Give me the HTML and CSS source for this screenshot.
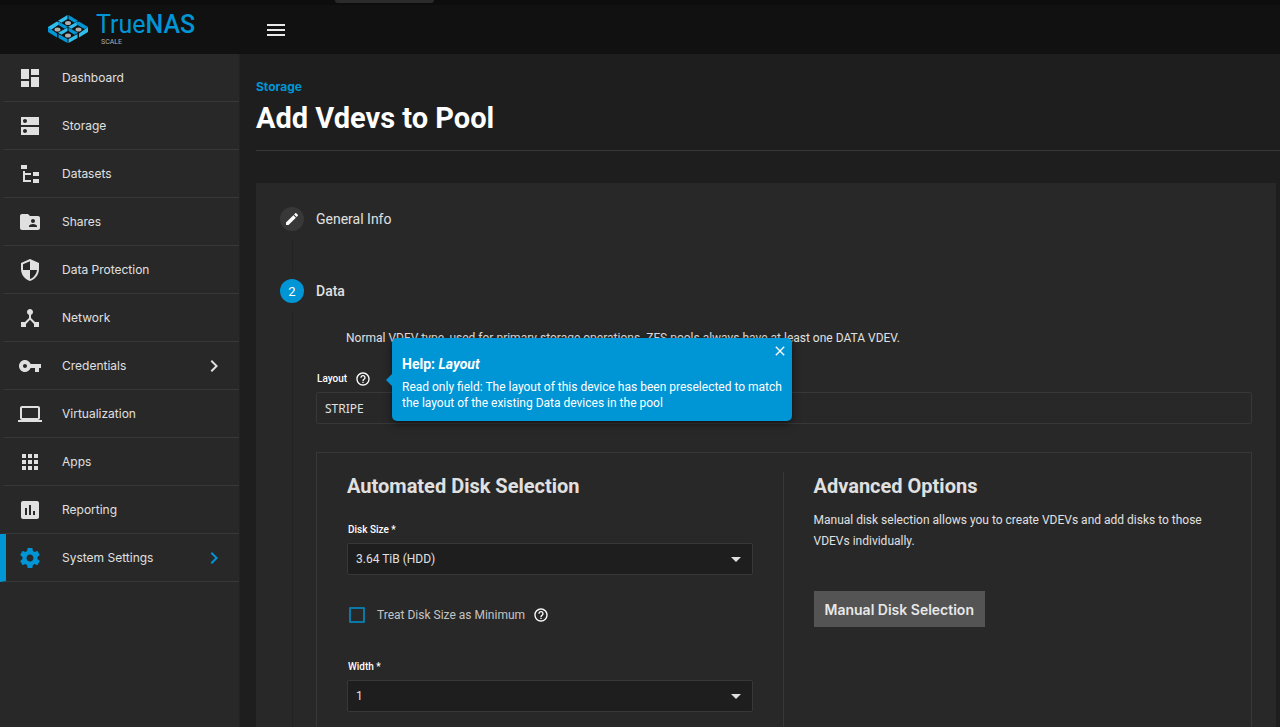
FILE: index.html
```
<!DOCTYPE html>
<html lang="en">
<head>
    <meta charset="UTF-8">
    <meta name="viewport" content="width=device-width, initial-scale=1.0">
    <title>TrueNAS - Add Vdevs to Pool</title>
    <link rel="stylesheet" href="styles.css">
</head>
<body>
    <header class="topbar">
        <div class="window-strip"><span class="window-tab"></span></div>
        <a href="#" class="logo">
            <!-- isometric lattice mark -->
            <svg class="logo-mark" viewBox="0 0 40 28" width="40" height="28">
                <g fill="#31beec">
                    <path d="M19.500 0v4l-6 3.800-3.500-2z"/>
                    <path d="M9 6.500l3.500 2L8 11.500 0 17v-5z"/>
                    <path d="M29.500 6.500v3.500l-6 3.800-3.500-2z"/>
                    <path d="M19.500 12.500v3.500l-6 3.800-3.500-2z"/>
                    <path d="M40 12v5l-9 5.500v-4z"/>
                    <path d="M29.500 19v4L20.500 28v-4z"/>
                </g>
                <g fill="#0095d5">
                    <path d="M20.500 0v4l6 3.800 3.500-2z"/>
                    <path d="M31 6.500l-3.500 2L32 11.500l4.500 2.500 3.500-2z"/>
                    <path d="M10.500 6.500v3.500l6 3.800 3.500-2z"/>
                    <path d="M20.500 12.500v3.500l6 3.800 3.500-2z"/>
                    <path d="M0 12v5l9 5.500v-4z"/>
                    <path d="M10.500 19v4l9 5v-4z"/>
                </g>
                <g fill="#aeaeae">
                    <ellipse cx="20" cy="8" rx="3" ry="2"/>
                    <ellipse cx="9.500" cy="14.500" rx="3" ry="2"/>
                    <ellipse cx="30.500" cy="14.500" rx="3" ry="2"/>
                    <ellipse cx="20" cy="20.500" rx="3" ry="2"/>
                </g>
            </svg>
            <span class="logo-text">
                <span class="logo-name">True<b>NAS</b></span>
                <span class="logo-edition">SCALE</span>
            </span>
        </a>
        <button class="menu-toggle" aria-label="Toggle menu">
            <svg viewBox="0 0 24 24" width="24" height="24"><path d="M3 18h18v-2H3v2zm0-5h18v-2H3v2zm0-7v2h18V6H3z"/></svg>
        </button>
    </header>

    <div class="layout">
        <nav class="sidebar">
            <a href="#" class="nav-item">
                <svg viewBox="0 0 24 24"><path d="M3 13h8V3H3v10zm0 8h8v-6H3v6zm10 0h8V11h-8v10zm0-18v6h8V3h-8z"/></svg>
                <span>Dashboard</span>
            </a>
            <a href="#" class="nav-item">
                <svg viewBox="0 0 24 24"><path d="M21 13H3v8h18v-8zM7 19c-1.100 0-2-.9-2-2s.9-2 2-2 2 .9 2 2-.9 2-2 2zM21 3H3v8h18V3zM7 9c-1.100 0-2-.9-2-2s.9-2 2-2 2 .9 2 2-.9 2-2 2z"/></svg>
                <span>Storage</span>
            </a>
            <a href="#" class="nav-item">
                <svg viewBox="0 0 24 24"><path d="M3 3h6v4H3V3zm12 7h6v4h-6v-4zm0 7h6v4h-6v-4zm-2-4H7v5h6v2H5V9h2v2h6v2z"/></svg>
                <span>Datasets</span>
            </a>
            <a href="#" class="nav-item">
                <svg viewBox="0 0 24 24"><path d="M20 6h-8l-2-2H4c-1.100 0-2 .9-2 2v12c0 1.100.9 2 2 2h16c1.100 0 2-.9 2-2V8c0-1.100-.9-2-2-2zm-5 3c1.100 0 2 .9 2 2s-.9 2-2 2-2-.9-2-2 .9-2 2-2zm4 8h-8v-1c0-1.330 2.670-2 4-2s4 .67 4 2v1z"/></svg>
                <span>Shares</span>
            </a>
            <a href="#" class="nav-item">
                <svg viewBox="0 0 24 24"><path d="M12 1L3 5v6c0 5.550 3.840 10.740 9 12 5.160-1.260 9-6.450 9-12V5l-9-4zm0 10.990h7c-.53 4.120-3.280 7.790-7 8.940V12H5V6.300l7-3.110v8.800z"/></svg>
                <span>Data Protection</span>
            </a>
            <a href="#" class="nav-item">
                <svg viewBox="0 0 24 24"><path d="M17 16l-4-4V8.820C14.160 8.400 15 7.300 15 6c0-1.660-1.340-3-3-3S9 4.340 9 6c0 1.300.84 2.400 2 2.820V12l-4 4H3v5h5v-3.050l4-4.200 4 4.200V21h5v-5h-4z"/></svg>
                <span>Network</span>
            </a>
            <a href="#" class="nav-item">
                <svg viewBox="0 0 24 24"><path d="M12.650 10C11.830 7.670 9.610 6 7 6c-3.310 0-6 2.690-6 6s2.690 6 6 6c2.610 0 4.830-1.670 5.650-4H17v4h4v-4h2v-4H12.650zM7 14c-1.100 0-2-.9-2-2s.9-2 2-2 2 .9 2 2-.9 2-2 2z"/></svg>
                <span>Credentials</span>
                <svg class="chevron" viewBox="0 0 24 24"><path d="M10 6L8.590 7.410 13.170 12l-4.580 4.590L10 18l6-6z"/></svg>
            </a>
            <a href="#" class="nav-item">
                <svg viewBox="0 0 24 24"><path d="M20 18c1.100 0 1.990-.9 1.990-2L22 6c0-1.100-.9-2-2-2H4c-1.100 0-2 .9-2 2v10c0 1.100.9 2 2 2H0v2h24v-2h-4zM4 6h16v10H4V6z"/></svg>
                <span>Virtualization</span>
            </a>
            <a href="#" class="nav-item">
                <svg viewBox="0 0 24 24"><path d="M4 8h4V4H4v4zm6 12h4v-4h-4v4zm-6 0h4v-4H4v4zm0-6h4v-4H4v4zm6 0h4v-4h-4v4zm6-10v4h4V4h-4zm-6 4h4V4h-4v4zm6 6h4v-4h-4v4zm0 6h4v-4h-4v4z"/></svg>
                <span>Apps</span>
            </a>
            <a href="#" class="nav-item">
                <svg viewBox="0 0 24 24"><path d="M19 3H5c-1.100 0-2 .9-2 2v14c0 1.100.9 2 2 2h14c1.100 0 2-.9 2-2V5c0-1.100-.9-2-2-2zM9 17H7v-7h2v7zm4 0h-2V7h2v10zm4 0h-2v-4h2v4z"/></svg>
                <span>Reporting</span>
            </a>
            <a href="#" class="nav-item active">
                <svg viewBox="0 0 24 24"><path d="M19.430 12.980c.04-.32.07-.64.07-.98s-.03-.66-.07-.98l2.110-1.650c.19-.15.24-.42.12-.64l-2-3.460c-.12-.22-.39-.3-.61-.22l-2.490 1c-.52-.4-1.080-.73-1.690-.98l-.38-2.650C14.460 2.180 14.250 2 14 2h-4c-.25 0-.46.18-.49.42l-.38 2.650c-.61.25-1.170.59-1.690.98l-2.490-1c-.23-.09-.49 0-.61.22l-2 3.460c-.13.22-.07.49.12.64l2.110 1.650c-.04.32-.07.65-.07.98s.03.66.07.98l-2.110 1.650c-.19.15-.24.42-.12.64l2 3.460c.12.22.39.3.61.22l2.490-1c.52.4 1.080.73 1.690.98l.38 2.650c.03.24.24.42.49.42h4c.25 0 .46-.18.49-.42l.38-2.650c.61-.25 1.170-.59 1.690-.98l2.490 1c.23.09.49 0 .61-.22l2-3.460c.12-.22.07-.49-.12-.64l-2.110-1.650zM12 15.500c-1.930 0-3.500-1.570-3.500-3.500s1.570-3.500 3.500-3.500 3.500 1.570 3.500 3.500-1.570 3.500-3.500 3.500z"/></svg>
                <span>System Settings</span>
                <svg class="chevron" viewBox="0 0 24 24"><path d="M10 6L8.590 7.410 13.170 12l-4.580 4.590L10 18l6-6z"/></svg>
            </a>
        </nav>

        <main class="content">
            <div class="page-header">
                <a href="#" class="breadcrumb">Storage</a>
                <h1>Add Vdevs to Pool</h1>
            </div>

            <section class="card">
                <div class="step">
                    <span class="step-icon">
                        <svg viewBox="0 0 24 24" width="16" height="16"><path d="M3 17.250V21h3.750L17.810 9.940l-3.750-3.750L3 17.250zM20.710 7.040c.39-.39.39-1.020 0-1.410l-2.340-2.340c-.39-.39-1.020-.39-1.410 0l-1.830 1.830 3.750 3.750 1.830-1.830z"/></svg>
                    </span>
                    <span class="step-label">General Info</span>
                </div>
                <div class="step current">
                    <span class="step-icon">2</span>
                    <span class="step-label">Data</span>
                </div>

                <div class="step-body">
                    <p class="description">Normal VDEV type, used for primary storage operations. ZFS pools always have at least one DATA VDEV.</p>

                    <div class="label-row">
                        <label for="layout">Layout</label>
                        <button class="help" aria-label="Help for Layout">
                            <svg viewBox="0 0 24 24" width="16" height="16"><path d="M11 18h2v-2h-2v2zm1-16C6.480 2 2 6.480 2 12s4.480 10 10 10 10-4.480 10-10S17.520 2 12 2zm0 18c-4.410 0-8-3.590-8-8s3.590-8 8-8 8 3.590 8 8-3.590 8-8 8zm0-14c-2.210 0-4 1.790-4 4h2c0-1.100.9-2 2-2s2 .9 2 2c0 2-3 1.750-3 5h2c0-2.250 3-2.500 3-5 0-2.210-1.790-4-4-4z"/></svg>
                        </button>
                        <div class="tooltip" role="tooltip">
                            <button class="tooltip-close" aria-label="Close">
                                <svg viewBox="0 0 24 24" width="16" height="16"><path d="M19 6.410L17.590 5 12 10.590 6.410 5 5 6.410 10.590 12 5 17.590 6.410 19 12 13.410 17.590 19 19 17.590 13.410 12z"/></svg>
                            </button>
                            <h4>Help: <i>Layout</i></h4>
                            <p>Read only field: The layout of this device has been preselected to match the layout of the existing Data devices in the pool</p>
                        </div>
                    </div>
                    <input type="text" id="layout" class="readonly-field" value="STRIPE" readonly>

                    <div class="selection">
                        <div class="automated">
                            <h2>Automated Disk Selection</h2>
                            <label for="disk-size">Disk Size *</label>
                            <div class="select-wrap">
                                <select id="disk-size"><option>3.64 TiB (HDD)</option></select>
                            </div>
                            <div class="check-row">
                                <input type="checkbox" id="treat-min">
                                <label for="treat-min">Treat Disk Size as Minimum</label>
                                <button class="help" aria-label="Help for Treat Disk Size as Minimum">
                                    <svg viewBox="0 0 24 24" width="16" height="16"><path d="M11 18h2v-2h-2v2zm1-16C6.480 2 2 6.480 2 12s4.480 10 10 10 10-4.480 10-10S17.520 2 12 2zm0 18c-4.410 0-8-3.590-8-8s3.590-8 8-8 8 3.590 8 8-3.590 8-8 8zm0-14c-2.210 0-4 1.790-4 4h2c0-1.100.9-2 2-2s2 .9 2 2c0 2-3 1.750-3 5h2c0-2.250 3-2.500 3-5 0-2.210-1.790-4-4-4z"/></svg>
                                </button>
                            </div>
                            <label for="width">Width *</label>
                            <div class="select-wrap">
                                <select id="width"><option>1</option></select>
                            </div>
                        </div>
                        <div class="advanced">
                            <h2>Advanced Options</h2>
                            <p>Manual disk selection allows you to create VDEVs and add disks to those VDEVs individually.</p>
                            <button class="manual">Manual Disk Selection</button>
                        </div>
                    </div>
                </div>
            </section>
        </main>
    </div>
</body>
</html>
```
FILE: styles.css
```
* {
    box-sizing: border-box;
}

body {
    margin: 0;
    height: 100vh;
    display: flex;
    flex-direction: column;
    overflow: hidden;
    background-color: #1e1e1e;
    color: #e0e0e0;
    font-family: Roboto, sans-serif;
    font-size: 12px;
}

h1, h2, h4, p {
    margin: 0;
}

a {
    text-decoration: none;
}

button {
    border: none;
    padding: 0;
    background: none;
    cursor: pointer;
}

svg {
    display: block;
    fill: currentColor;
}

/* Top bar */
.topbar {
    position: relative;
    flex: none;
    display: flex;
    align-items: center;
    height: 54px;
    padding-top: 5px;
    background-color: #111;
}

.window-strip {
    position: absolute;
    top: 0;
    left: 0;
    right: 0;
    height: 5px;
    background-color: #0d0d0d;
}

.window-tab {
    display: block;
    width: 99px;
    height: 3px;
    margin-left: 335px;
    border-radius: 0 0 4px 4px;
    background-color: #2b2b2b;
}

.logo {
    display: flex;
    align-items: center;
    width: 240px;
    padding: 0 0 2px 48px;
    gap: 8px;
    color: #0095d5;
}

.logo-text {
    display: flex;
    flex-direction: column;
}

.logo-name {
    font-size: 25px;
    line-height: 26px;
}

.logo-name b {
    font-weight: 500;
}

.logo-edition {
    padding-left: 5px;
    color: #aeaeae;
    font-size: 7px;
    line-height: 8px;
}

.menu-toggle {
    margin-left: 24px;
    color: #e8e8e8;
}

/* Sidebar */
.layout {
    flex: 1;
    display: flex;
    min-height: 0;
}

.sidebar {
    flex: none;
    width: 240px;
    background-color: #282828;
    border-right: 1px solid #222;
}

.nav-item {
    display: flex;
    align-items: center;
    height: 48px;
    padding: 0 13px 0 12px;
    border-left: 6px solid transparent;
    border-bottom: 1px solid #383838;
    color: #e0e0e0;
    font-family: Inter, sans-serif;
    font-size: 12px;
}

.nav-item svg {
    width: 24px;
    height: 24px;
}

.nav-item span {
    flex: 1;
    margin-left: 20px;
}

.nav-item.active {
    border-left-color: #0095d5;
}

.nav-item.active svg {
    color: #0095d5;
}

/* Page */
.content {
    flex: 1;
    min-width: 0;
    padding-left: 16px;
}

.page-header {
    height: 97px;
    padding-top: 24px;
    border-bottom: 1px solid #383838;
}

.breadcrumb {
    display: block;
    color: #0095d5;
    font-family: Inter, sans-serif;
    font-size: 12px;
    font-weight: 700;
    line-height: 18px;
}

h1 {
    color: #fff;
    font-size: 29px;
    line-height: 44px;
}

.card {
    margin: 32px 4px 0 0;
    padding: 24px;
    background-color: #282828;
}

/* Stepper */
.step {
    position: relative;
    display: flex;
    align-items: center;
    gap: 12px;
    height: 24px;
    margin-bottom: 48px;
    font-size: 14px;
}

.step::after {
    content: "";
    position: absolute;
    left: 12px;
    top: 32px;
    width: 1px;
    height: 32px;
    background-color: #222;
}

.step-icon {
    display: flex;
    align-items: center;
    justify-content: center;
    width: 24px;
    height: 24px;
    border-radius: 50%;
    background-color: #383838;
    color: #fff;
}

.step.current {
    margin-bottom: 25px;
    font-weight: 500;
}

.step.current::after {
    height: 420px;
}

.step.current .step-icon {
    background-color: #0095d5;
    font-size: 13px;
    font-weight: 400;
}

.step-body {
    padding-left: 36px;
}

.description {
    padding-left: 30px;
    line-height: 21px;
}

label {
    display: block;
    color: #fff;
    font-size: 10px;
    font-weight: 500;
    line-height: 16px;
}

.label-row {
    position: relative;
    display: flex;
    align-items: center;
    gap: 8px;
    margin: 22px 0 5px 1px;
}

.help {
    color: #fff;
}

.readonly-field {
    display: block;
    width: 100%;
    height: 32px;
    padding: 0 8px;
    border: 1px solid #383838;
    border-radius: 2px;
    background: none;
    color: #e0e0e0;
    font-family: "Noto Sans", sans-serif;
    font-size: 12px;
}

/* Tooltip */
.tooltip {
    position: absolute;
    left: 75px;
    top: -33px;
    z-index: 2;
    width: 400px;
    padding: 16px 8px 10px 10px;
    border-radius: 5px;
    background-color: #0095d5;
    box-shadow: 0 3px 8px rgba(0, 0, 0, 0.5);
    color: #fff;
}

.tooltip::before {
    content: "";
    position: absolute;
    left: -6px;
    top: 36px;
    border: 6px solid transparent;
    border-left: none;
    border-right-color: #0095d5;
}

.tooltip h4 {
    font-size: 14px;
    line-height: 20px;
    margin-bottom: 5px;
}

.tooltip p {
    line-height: 16px;
}

.tooltip-close {
    position: absolute;
    top: 5px;
    right: 4px;
    color: #fff;
}

/* Disk selection */
.selection {
    display: flex;
    margin-top: 28px;
    padding: 19px 32px 0 30px;
    border: 1px solid #383838;
}

h2 {
    font-size: 20px;
    line-height: 28px;
}

.automated {
    flex: 1;
    padding-right: 30px;
    padding-bottom: 32px;
    border-right: 1px solid #383838;
}

.automated > label {
    margin: 22px 0 5px 1px;
}

.select-wrap {
    position: relative;
}

.select-wrap::after {
    content: "";
    position: absolute;
    right: 12px;
    top: 14px;
    border: 5px solid transparent;
    border-bottom: none;
    border-top-color: #e0e0e0;
    pointer-events: none;
}

select {
    display: block;
    appearance: none;
    width: 100%;
    height: 32px;
    padding: 0 8px;
    border: 1px solid #383838;
    border-radius: 2px;
    background-color: #1e1e1e;
    color: #e0e0e0;
    font-family: Roboto, sans-serif;
    font-size: 12px;
}

.check-row {
    display: flex;
    align-items: center;
    gap: 8px;
    margin: 32px 0 36px 2px;
}

.check-row input {
    appearance: none;
    width: 16px;
    height: 16px;
    margin: 0 4px 0 0;
    border: 2px solid #0a78a9;
    border-radius: 1px;
}

.check-row label {
    color: #c4c4c4;
    font-size: 12px;
    font-weight: 400;
}

.advanced {
    flex: 1;
    padding-left: 30px;
}

.advanced p {
    margin: 10px 0 39px;
    line-height: 21px;
}

.manual {
    height: 36px;
    padding: 0 11px;
    background-color: #545454;
    color: #e8e8e8;
    font-family: Inter, sans-serif;
    font-size: 14px;
    font-weight: 600;
}
```
